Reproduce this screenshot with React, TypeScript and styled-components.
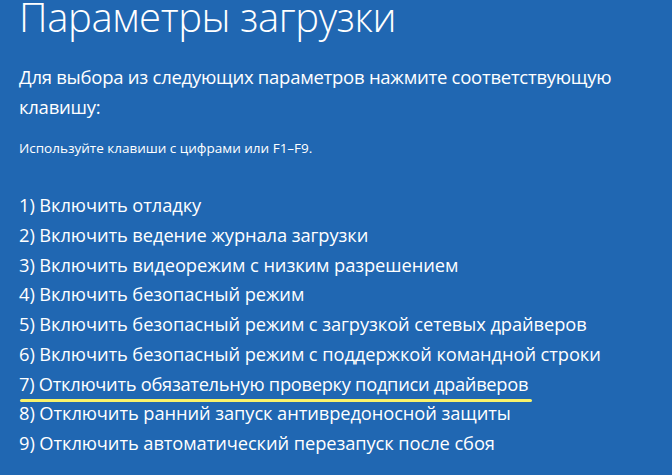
import React from "react";
import styled, { createGlobalStyle } from "styled-components";

const GlobalStyle = createGlobalStyle`
  html, body {
    margin: 0;
    padding: 0;
    background: #2067b2;
  }
  #root {
    min-height: 475px;
  }
`;

const Screen = styled.div`
  width: 672px;
  height: 475px;
  box-sizing: border-box;
  padding: 0 0 0 19px;
  background: #2067b2;
  color: #ffffff;
  font-family: "Open Sans", "Noto Sans", sans-serif;
  overflow: hidden;
`;

const Title = styled.h1`
  margin: 0;
  font-size: 40px;
  font-weight: 300;
  line-height: 34px;
  letter-spacing: -0.35px;
`;

const Lead = styled.p`
  margin: 28px 0 0;
  font-size: 18.5px;
  line-height: 29.5px;
  letter-spacing: -0.26px;
`;

const Hint = styled.p`
  margin: 18px 0 0;
  font-size: 13.5px;
  line-height: 18px;
`;

const Options = styled.ol`
  list-style: none;
  margin: 33px 0 0;
  padding: 0;
  display: flex;
  flex-direction: column;
`;

const Option = styled.li<{ $marked?: boolean }>`
  font-size: 18.3px;
  line-height: 29.75px;
  letter-spacing: ${(p) => (p.$marked ? "-0.28px" : "-0.08px")};
  span {
    position: relative;
  }
  ${(p) =>
    p.$marked &&
    `
    span::after {
      content: "";
      position: absolute;
      left: 1px;
      right: -4px;
      bottom: -6px;
      height: 3px;
      border-radius: 2px;
      background: #f8f26a;
    }
  `}
`;

const items = [
  "Включить отладку",
  "Включить ведение журнала загрузки",
  "Включить видеорежим с низким разрешением",
  "Включить безопасный режим",
  "Включить безопасный режим с загрузкой сетевых драйверов",
  "Включить безопасный режим с поддержкой командной строки",
  "Отключить обязательную проверку подписи драйверов",
  "Отключить ранний запуск антивредоносной защиты",
  "Отключить автоматический перезапуск после сбоя",
];

export default function App() {
  return (
    <>
      <GlobalStyle />
      <Screen>
        <Title>Параметры загрузки</Title>
        <Lead>
          Для выбора из следующих параметров нажмите соответствующую
          <br />
          клавишу:
        </Lead>
        <Hint>Используйте клавиши с цифрами или F1–F9.</Hint>
        <Options>
          {items.map((text, i) => (
            <Option key={i} $marked={i === 6}>
              <span>
                {i + 1}) {text}
              </span>
            </Option>
          ))}
        </Options>
      </Screen>
    </>
  );
}
